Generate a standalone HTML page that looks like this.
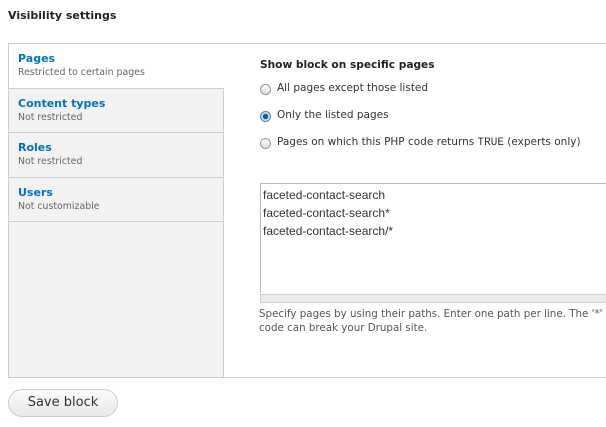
<!DOCTYPE html>
<html><head><style>
body{margin:0;background:#fff;font-family:"DejaVu Sans",Verdana,sans-serif;color:#333;width:606px;height:427px;overflow:hidden;position:relative}
.a{position:absolute}
h2{position:absolute;left:8px;top:9px;margin:0;font-size:11px;font-weight:bold;color:#222}
.box{left:8px;top:43px;width:620px;height:333px;border:1px solid #ccc;background:#fff}
.side{left:9px;top:44px;width:214px;height:333px;background:#f2f2f2;border-right:1px solid #ccc}
.tab{position:absolute;left:9px;width:214px;border-bottom:1px solid #ccc;box-sizing:border-box;padding:8px 0 0 9px}
.tab b{display:block;color:#0073ba;font-size:11px;line-height:14px}
.tab span{display:block;font-size:9.4px;color:#666;line-height:13px}
.lbl{font-size:10.5px;color:#333}
.r{position:absolute;width:11px;height:11px;border-radius:50%;border:1px solid #999;background:linear-gradient(#fff,#ddd);box-sizing:border-box}
.ta{left:260px;top:183px;width:360px;height:110px;border:1px solid #bbb;border-bottom:none;background:#fff;font-family:"Liberation Sans",Arial,sans-serif;font-size:12px;line-height:18px;padding:2px 0 0 2px;box-sizing:border-box;color:#333}
.grip{left:260px;top:294px;width:360px;height:9px;background:#ebebeb;border:1px solid #ccc;box-sizing:border-box}
.btn{left:8px;top:389px;width:110px;height:28px;border:1px solid #ccc;border-radius:14px;background:linear-gradient(#fafafa,#e8e8e8);box-sizing:border-box;font-size:13px;text-align:center;line-height:26px;color:#333}
</style></head><body>
<h2>Visibility settings</h2>
<div class="a box"></div>
<div class="a side"></div>
<div class="tab" style="top:44px;height:45px;background:#fff;width:215px"><b>Pages</b><span>Restricted to certain pages</span></div>
<div class="tab" style="top:89px;height:44px"><b>Content types</b><span>Not restricted</span></div>
<div class="tab" style="top:133px;height:45px"><b>Roles</b><span>Not restricted</span></div>
<div class="tab" style="top:178px;height:44px"><b>Users</b><span>Not customizable</span></div>
<div class="a" style="left:260px;top:59px;font-size:10.6px;font-weight:bold;color:#222">Show block on specific pages</div>
<div class="r" style="left:260px;top:84px"></div><div class="a lbl" style="left:277px;top:82px">All pages except those listed</div>
<div class="r" style="left:260px;top:111px;border-color:#5c7d95;background:radial-gradient(circle,#0a62a8 0 2.5px,#cfe3f2 3px)"></div><div class="a lbl" style="left:277px;top:109px">Only the listed pages</div>
<div class="r" style="left:260px;top:138px"></div><div class="a lbl" style="left:277px;top:136px">Pages on which this PHP code returns <span style="font-family:'Liberation Mono',monospace;font-size:11px">TRUE</span> (experts only)</div>
<div class="a ta">faceted-contact-search<br>faceted-contact-search*<br>faceted-contact-search/*</div>
<div class="a grip"></div>
<div class="a" style="left:259px;top:307px;font-size:10.3px;line-height:14px;color:#555;white-space:nowrap">Specify pages by using their paths. Enter one path per line. The '*'<br>code can break your Drupal site.</div>
<div class="a btn">Save block</div>
</body></html>
